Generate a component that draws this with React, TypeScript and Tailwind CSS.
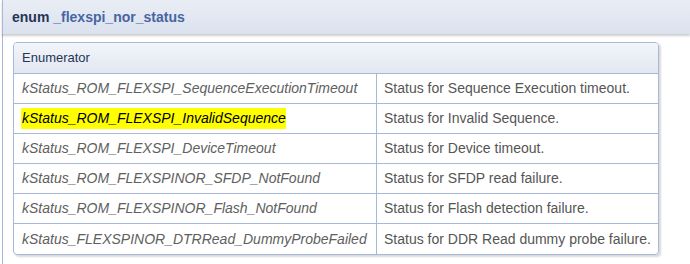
import React from "react";

const rows = [
  { name: "kStatus_ROM_FLEXSPI_SequenceExecutionTimeout", desc: "Status for Sequence Execution timeout." },
  { name: "kStatus_ROM_FLEXSPI_InvalidSequence", desc: "Status for Invalid Sequence.", hl: true },
  { name: "kStatus_ROM_FLEXSPI_DeviceTimeout", desc: "Status for Device timeout." },
  { name: "kStatus_ROM_FLEXSPINOR_SFDP_NotFound", desc: "Status for SFDP read failure." },
  { name: "kStatus_ROM_FLEXSPINOR_Flash_NotFound", desc: "Status for Flash detection failure." },
  { name: "kStatus_FLEXSPINOR_DTRRead_DummyProbeFailed", desc: "Status for DDR Read dummy probe failure." },
];

export default function App() {
  return (
    <div className="w-[690px] h-[264px] bg-white overflow-hidden font-['Liberation_Sans',Arial,sans-serif] text-[14px]">
      {/* Member prototype header */}
      <div className="ml-[2px] h-[34px] border-l border-[#A8B8D9] bg-gradient-to-b from-[#e9edf5] to-[#dbe2ee] shadow-[0_2px_2px_rgba(0,0,0,0.2)] flex items-center pl-[9px] font-bold relative z-10">
        <span className="text-[#253555]">enum&nbsp;</span>
        <span className="text-[#4665A2]">_flexspi_nor_status</span>
      </div>

      {/* Member documentation */}
      <div className="ml-[2px] h-[230px] border-l border-[#A8B8D9] pl-[10px] pt-[8px]">
        <div className="w-[646px] border border-[#A8B8D9] rounded-[4px] shadow-[2px_2px_2px_rgba(0,0,0,0.15)] overflow-hidden">
          <div className="h-[31px] flex items-center pl-[8px] border-b border-[#A8B8D9] bg-gradient-to-b from-[#f2f5f9] to-[#e2e8f2] text-[#253555] text-[13px]">
            Enumerator
          </div>
          {rows.map((r, i) => (
            <div
              key={i}
              className={`flex h-[30px] ${i < rows.length - 1 ? "border-b border-[#A8B8D9]" : "h-[29px]"}`}
            >
              <div className="w-[363px] flex items-center pl-[8px] italic text-[#606060] border-r border-[#A8B8D9] whitespace-nowrap">
                {r.hl ? (
                  <span className="bg-[#ffff00] text-black pl-[1px] -ml-[1px]">{r.name}</span>
                ) : (
                  r.name
                )}
              </div>
              <div className="flex-1 flex items-center pl-[7px] text-[#555555] whitespace-nowrap">{r.desc}</div>
            </div>
          ))}
        </div>
      </div>
    </div>
  );
}
